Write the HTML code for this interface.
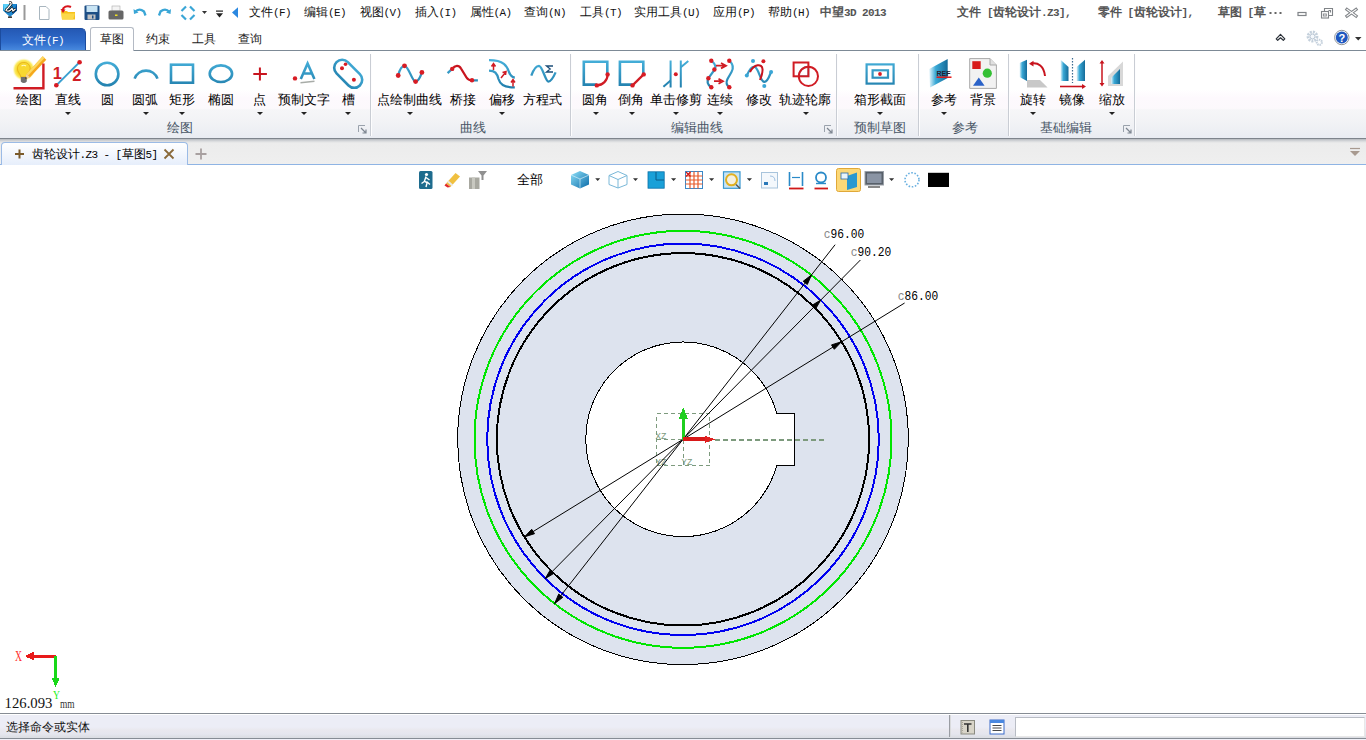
<!DOCTYPE html>
<html><head><meta charset="utf-8">
<style>
*{margin:0;padding:0;box-sizing:border-box}
html,body{width:1366px;height:740px;overflow:hidden;background:#fff;font-family:"Liberation Sans",sans-serif;font-size:12px;color:#222}
.a{position:absolute;white-space:nowrap}
.t{font-size:12px;line-height:14px;color:#111}
.b{font-weight:bold;color:#555}
.m{font-family:"Liberation Mono",monospace;font-size:11px;letter-spacing:-0.6px}
#title{left:0;top:0;width:1366px;height:27px;background:#fff}
#tabs{left:0;top:27px;width:1366px;height:24px;background:#fff}
#filebtn{left:0;top:28px;width:86px;height:23px;background:linear-gradient(#2458b4,#2f6ccb 60%,#4a8ce0);border:1px solid #1c4c9e;border-bottom:none;border-radius:0 5px 0 0;color:#fff;font-size:12px;text-align:center;line-height:22px}
#acttab{z-index:2;left:90px;top:27px;width:44px;height:24px;background:#fff;border:1px solid #b4bac4;border-bottom:none;border-radius:3px 3px 0 0}
#ribbon{left:0;top:50px;width:1366px;height:89px;background:linear-gradient(#fff 0,#fff 44%,#fdf9fd 54%,#fcf9fc 66%,#f6f6f8 67.5%,#f1f2f5 84%,#e9ecf2 100%);border-top:1px solid #7d8a96;border-bottom:1px solid #7e848c}
.sep{position:absolute;top:54px;width:2px;height:82px;background:linear-gradient(90deg,#c9cdd4 50%,#fdfdfe 50%)}
.lbl{position:absolute;top:92px;font-size:12.5px;line-height:16px;color:#000;text-align:center}
.glbl{position:absolute;top:120px;font-size:12.5px;line-height:16px;color:#485666;text-align:center}
.dd{position:absolute;top:112px;width:0;height:0;border-left:3.5px solid transparent;border-right:3.5px solid transparent;border-top:3.5px solid #222}
#doctabs{left:0;top:139px;width:1366px;height:26px;background:linear-gradient(#b4b8bd 0,#d6d8db 2px,#ececec 4px,#efefef 100%);border-bottom:1px solid #8fb4e4}
#doctab{left:1px;top:142px;width:187px;height:23px;background:linear-gradient(#ffffff,#e6eefb);border:1px solid #9bbbe6;border-bottom:none;border-radius:4px 4px 0 0}
#status{left:0;top:713px;width:1366px;height:27px;background:linear-gradient(#868c94 0,#868c94 1px,#fff 1px,#fff 2px,#ecedf6 2px,#ecedf6 14px,#e9e8ee 17px,#e5e6ee 21px,#dcdee4 24px,#dcdee4 25px,#868c94 25px,#868c94 26px,#f0f0f8 26px)}
</style></head><body>
<div id="title" class="a"></div>
<div id="tabs" class="a"></div>
<div id="filebtn" class="a">文件<span class="m">(F)</span></div>
<div id="acttab" class="a"></div>
<div id="ribbon" class="a"></div>
<!--RIB-->
<div class="lbl" style="left:-21.5px;width:100px">绘图</div>
<div class="lbl" style="left:18.0px;width:100px">直线</div>
<div class="lbl" style="left:57.0px;width:100px">圆</div>
<div class="lbl" style="left:95.0px;width:100px">圆弧</div>
<div class="lbl" style="left:131.5px;width:100px">矩形</div>
<div class="lbl" style="left:171.0px;width:100px">椭圆</div>
<div class="lbl" style="left:209.0px;width:100px">点</div>
<div class="lbl" style="left:253.5px;width:100px">预制文字</div>
<div class="lbl" style="left:298.0px;width:100px">槽</div>
<div class="lbl" style="left:359.0px;width:100px">点绘制曲线</div>
<div class="lbl" style="left:413.4px;width:100px">桥接</div>
<div class="lbl" style="left:452.0px;width:100px">偏移</div>
<div class="lbl" style="left:492.6px;width:100px">方程式</div>
<div class="lbl" style="left:544.8px;width:100px">圆角</div>
<div class="lbl" style="left:581.3px;width:100px">倒角</div>
<div class="lbl" style="left:625.5px;width:100px">单击修剪</div>
<div class="lbl" style="left:669.5px;width:100px">连续</div>
<div class="lbl" style="left:708.5px;width:100px">修改</div>
<div class="lbl" style="left:755.0px;width:100px">轨迹轮廓</div>
<div class="lbl" style="left:830.0px;width:100px">箱形截面</div>
<div class="lbl" style="left:893.5px;width:100px">参考</div>
<div class="lbl" style="left:932.5px;width:100px">背景</div>
<div class="lbl" style="left:983.0px;width:100px">旋转</div>
<div class="lbl" style="left:1022.3px;width:100px">镜像</div>
<div class="lbl" style="left:1061.6px;width:100px">缩放</div>
<div class="glbl" style="left:130.0px;width:100px">绘图</div>
<div class="glbl" style="left:423.0px;width:100px">曲线</div>
<div class="glbl" style="left:647.3px;width:100px">编辑曲线</div>
<div class="glbl" style="left:830.0px;width:100px">预制草图</div>
<div class="glbl" style="left:915.4px;width:100px">参考</div>
<div class="glbl" style="left:1015.8px;width:100px">基础编辑</div>
<div class="dd" style="left:64.5px"></div>
<div class="dd" style="left:142.5px"></div>
<div class="dd" style="left:178.5px"></div>
<div class="dd" style="left:256.5px"></div>
<div class="dd" style="left:300.5px"></div>
<div class="dd" style="left:344.5px"></div>
<div class="dd" style="left:406.5px"></div>
<div class="dd" style="left:499.1px"></div>
<div class="dd" style="left:592.5px"></div>
<div class="dd" style="left:628.5px"></div>
<div class="dd" style="left:672.5px"></div>
<div class="dd" style="left:716.5px"></div>
<div class="dd" style="left:803.3px"></div>
<div class="dd" style="left:877.0px"></div>
<div class="dd" style="left:940.5px"></div>
<div class="dd" style="left:1030.2px"></div>
<div class="dd" style="left:1109.0px"></div>
<div class="sep" style="left:370.0px"></div>
<div class="sep" style="left:570.0px"></div>
<div class="sep" style="left:836.0px"></div>
<div class="sep" style="left:918.0px"></div>
<div class="sep" style="left:1008.0px"></div>
<div class="sep" style="left:1133.5px"></div>
<svg class="a" style="left:358px;top:125px" width="9" height="9"><path d="M0.5 7V0.5H7" fill="none" stroke="#9aa2ac"/><path d="M3 3L8 8M8 4.5V8H4.5" fill="none" stroke="#7d8590" stroke-width="1.2"/></svg>
<svg class="a" style="left:824px;top:125px" width="9" height="9"><path d="M0.5 7V0.5H7" fill="none" stroke="#9aa2ac"/><path d="M3 3L8 8M8 4.5V8H4.5" fill="none" stroke="#7d8590" stroke-width="1.2"/></svg>
<svg class="a" style="left:1122.5px;top:125px" width="9" height="9"><path d="M0.5 7V0.5H7" fill="none" stroke="#9aa2ac"/><path d="M3 3L8 8M8 4.5V8H4.5" fill="none" stroke="#7d8590" stroke-width="1.2"/></svg>
<!--/RIB-->
<!--ICO-->
<svg class="a" style="left:0;top:0" width="1366" height="140" viewBox="0 0 1366 140">
<defs>
<linearGradient id="bl" gradientUnits="userSpaceOnUse" x1="0" y1="55" x2="0" y2="92"><stop offset="0" stop-color="#4cb8e2"/><stop offset="1" stop-color="#1c78a6"/></linearGradient>
<linearGradient id="pr" x1="0" y1="0" x2="1" y2="0"><stop offset="0" stop-color="#e8f6fb"/><stop offset=".35" stop-color="#3aa9d6"/><stop offset="1" stop-color="#146b99"/></linearGradient>
<radialGradient id="glow"><stop offset=".55" stop-color="#f7d21c"/><stop offset=".8" stop-color="#fbec6a"/><stop offset="1" stop-color="#fffbd0" stop-opacity="0"/></radialGradient>
</defs>
<!-- title bar -->
<path d="M3 4 H17 V10.5 L10 17 L3 10.5 Z" fill="#1e88d0"/><path d="M3 4 H10 L4 11 Z" fill="#5cd0f8"/><path d="M17 4 V10.5 L12 15 Z" fill="#0a4a90"/>
<path d="M9 2.2 Q11.5 2 11 4.5 L8 8 Q6 9.5 6 10.5 Q8.5 12 10.5 10 L12 8.5 L13 11 L15.5 9" stroke="#000" stroke-width="2.6" fill="none"/><path d="M9 2.2 Q11.5 2 11 4.5 L8 8 Q6 9.5 6 10.5 Q8.5 12 10.5 10 L12 8.5 L13 11 L15.5 9" stroke="#fff" stroke-width="1.3" fill="none"/><rect x="8" y="16.5" width="4" height="1.3" fill="#111"/>
<rect x="23.5" y="5" width="2" height="15" fill="#999"/>
<path d="M39.5 6.5 H46 L49 9.5 V19.5 H39.5 Z" fill="#fff" stroke="#a9b6bf"/>
<path d="M61 11 H67 L68 12 H75 V19.5 H62 Z" fill="#f6c21c"/>
<path d="M61.5 13.5 H75 L73 19.5 H62 Z" fill="#fbd84a"/>
<path d="M71 7 C67 5 63 7 62.5 10.5" stroke="#d8141c" stroke-width="2" fill="none"/><path d="M60.5 9 L63 13 L65.5 9.5 Z" fill="#d8141c"/>
<rect x="84.5" y="5.5" width="15" height="14.5" rx="1" fill="#1d4f86"/><rect x="86.5" y="6" width="11" height="6" fill="#c8e4f4"/><rect x="87.5" y="14.5" width="8" height="5" fill="#c0c0c0"/><rect x="92" y="15.5" width="1.5" height="3" fill="#1d4f86"/>
<rect x="112" y="6" width="8" height="5" fill="#f4f4f4" stroke="#aaa" stroke-width=".6"/><path d="M108.5 12 Q108.5 10.5 110 10.5 H122 Q123.5 10.5 123.5 12 V18 Q123.5 19.5 122 19.5 H110 Q108.5 19.5 108.5 18 Z" fill="#666"/><rect x="115" y="14.5" width="2.5" height="1.5" fill="#f0e020"/>
<path d="M135 12 Q139 7.5 144 11.5 L145.5 15.5" stroke="#3aa6d6" stroke-width="2.3" fill="none"/><path d="M133.5 9 L134 14 L138.5 12.5 Z" fill="#3aa6d6"/>
<path d="M169.5 12 Q165.5 7.5 160.5 11.5 L159 15.5" stroke="#3aa6d6" stroke-width="2.3" fill="none"/><path d="M171 9 L170.5 14 L166 12.5 Z" fill="#3aa6d6"/>
<g stroke="#3aa6d6" stroke-width="2.2" fill="none"><path d="M186 6.5 L181.5 11"/><path d="M190 6.5 L194.5 11"/><path d="M181.5 15 L186 19.5"/><path d="M194.5 15 L190 19.5"/></g>
<path d="M202 11 H207 L204.5 14 Z" fill="#333"/>
<rect x="216" y="10.5" width="7" height="1.2" fill="#222"/><path d="M216 13.2 H223 L219.5 17.5 Z" fill="#222"/>
<path d="M238 7.2 V18 L232 12.6 Z" fill="#2b88e0"/>
<!-- ribbon row icons -->
<path d="M1276.2 38.8 L1280.5 34.3 L1284.8 38.8 L1283.3 40.3 L1280.5 37.8 L1277.7 40.3 Z" stroke="#2a3038" stroke-width="1.2" fill="none" stroke-linejoin="round"/>
<circle cx="1312.5" cy="36.5" r="4.5" fill="none" stroke="#c4d0dc" stroke-width="2.8" stroke-dasharray="2 1"/><circle cx="1312.5" cy="36.5" r="2.5" fill="#f4f8fc" stroke="#a8b8c8" stroke-width=".8"/><circle cx="1319.3" cy="42.3" r="2.6" fill="none" stroke="#c4d0dc" stroke-width="2" stroke-dasharray="1.5 .8"/>
<circle cx="1341.8" cy="37.5" r="7.2" fill="#fff" stroke="#909498" stroke-width="1"/><circle cx="1341.8" cy="37.5" r="6" fill="#1f58c0"/><text x="1341.8" y="41.8" font-family="Liberation Sans" font-weight="bold" font-size="11" fill="#fff" text-anchor="middle">?</text>
<path d="M1355 37 H1361.5 L1358.2 40.5 Z" fill="#333"/>
<!-- group 1 -->
<circle cx="23.8" cy="69.5" r="11.5" fill="url(#glow)"/>
<path d="M23.8 62.5 C19.5 62.5 17.5 65.5 17.5 68.8 C17.5 72 20.5 74 20.8 77 H26.8 C27.1 74 30.1 72 30.1 68.8 C30.1 65.5 28.1 62.5 23.8 62.5 Z" fill="#f8d830" stroke="#e0a818" stroke-width=".7"/><path d="M21.5 66 Q23.8 64.5 26 66" stroke="#fff8c0" stroke-width="1.2" fill="none"/>
<path d="M20.8 77 H26.8 V81.5 Q23.8 84.5 20.8 81.5 Z" fill="#707070"/>
<path d="M42.7 56.3 L26.4 73.9 L25 79 L30 77.3 L46.3 59.7 Z" fill="#f5a81c"/><path d="M42.7 56.3 L26.4 73.9 L28.2 75.6 L44.5 58 Z" fill="#fcd860"/><path d="M26.4 73.9 L25 79 L30 77.3 Z" fill="#f0d0a0"/><path d="M25.6 76.8 L25 79 L27.2 78.2 Z" fill="#222"/>
<path d="M13.5 88.2 H43.4 V63.5" stroke="#d01c24" stroke-width="2.4" fill="none"/>
<text x="52.8" y="79.3" font-family="Liberation Sans" font-weight="bold" font-size="16.5" fill="#d01c24">1</text>
<text x="72.2" y="81.2" font-family="Liberation Sans" font-weight="bold" font-size="16.5" fill="#d01c24">2</text>
<path d="M56.3 85.4 L79.6 62.1" stroke="#3aa0d0" stroke-width="2"/>
<circle cx="56.3" cy="85.3" r="2.3" fill="#d81c24"/><circle cx="79.6" cy="62.2" r="2.3" fill="#d81c24"/>
<g stroke="url(#bl)" stroke-width="2.6" fill="none">
<circle cx="107.1" cy="74" r="11.3"/>
<path d="M134.6 78.6 A12.2 12.2 0 0 1 157.5 78.6"/>
<rect x="171" y="64.7" width="22" height="18"/>
<ellipse cx="220.9" cy="73.7" rx="11.2" ry="8.3"/>
<path d="M300.8 79 L307.6 63.5 L314.4 79 M303.5 73.5 H311.7"/>
<rect x="331.7" y="65.8" width="33" height="16" rx="8" transform="rotate(45 348.2 73.8)"/>
</g>
<path d="M253.3 74 H266.9 M259.9 67.4 V80.6" stroke="#c8141e" stroke-width="2"/>
<circle cx="295" cy="78.4" r="2.2" fill="#d81c24"/>
<path d="M300.5 82.8 L314.5 81.3" stroke="#a8aca8" stroke-width="1.6"/>
<circle cx="342" cy="68.3" r="2" fill="#d81c24"/><circle cx="345.5" cy="64.3" r="1.8" fill="#d81c24"/><circle cx="353.9" cy="79.7" r="2" fill="#d81c24"/>
<!-- group 2 -->
<g stroke="url(#bl)" stroke-width="2.3" fill="none">
<path d="M398.2 75.5 C400 68 402.5 65.8 404.5 65.8 C409 66.5 412 81.6 415.6 81.6 C419 81.5 421 75 421.9 72.4"/>
<path d="M447.6 73.1 L452.2 68.9 M472 80.3 H477.9"/>
<path d="M489 60.2 C504 60.2 507 66 509 72 C510.5 76 512 77.5 514.8 77.5"/>
<path d="M489 70.6 C495 70.6 497 73 498.5 79 C500 84 503 87.4 514.8 87.4"/>
<path d="M531.3 75.7 C534 68 536.5 65.8 539 65.8 C542.5 66 545.5 81.6 548.4 81.6 C551.5 81.5 554 76 555.6 72.4"/>
</g>
<circle cx="398.2" cy="75.5" r="2.4" fill="#d81c24"/><circle cx="404.5" cy="65.8" r="2.4" fill="#d81c24"/><circle cx="415.6" cy="81.6" r="2.4" fill="#d81c24"/><circle cx="421.9" cy="72.4" r="2.4" fill="#d81c24"/>
<path d="M452.2 68.9 C455 65 459 65 461 68.5 L466.5 77.5 C468 80 470 80.3 472 80.3" stroke="#c8141e" stroke-width="2.3" fill="none"/>
<circle cx="452.2" cy="68.9" r="2.2" fill="#d81c24"/><circle cx="472" cy="80.3" r="2.2" fill="#d81c24"/>
<path d="M493.5 70 V65 M491.5 66.5 L493.5 63.5 L495.5 66.5 M513 86.5 V81 M511 82.5 L513 79.5 L515 82.5 M501 78 L505 73 M502.5 72.5 L506 71.5 L505.5 75" stroke="#d01c24" stroke-width="1.5" fill="none"/>
<path d="M553 66 H546.5 L550.2 69 L546.5 72 H553" stroke="#1b4d78" stroke-width="1.3" fill="none"/>
<!-- group 3 -->
<g stroke="url(#bl)" stroke-width="2.6" fill="none">
<path d="M596.8 84.6 H583.8 V61.8 H607.3 V74.4"/>
<path d="M632.5 84.6 H619.9 V61.8 H643.3 V74.4"/>
<path d="M670.6 60.5 V87.5 M680.8 60.5 V87.5" stroke-width="2"/>
<path d="M663.4 86.8 L670.6 80.4 M680.8 67.2 L688.3 61" stroke-width="2"/>
<path d="M711.3 60.5 Q717.5 66 714.4 70 L708.6 77.8 Q705.5 83 711.3 87.5" stroke-width="2.2"/>
<path d="M729.3 60.5 Q735 66 731.5 72 L727.5 79 Q725 84 729.3 87.5" stroke-width="2.2"/>
<path d="M746.8 75.6 C750 68 752.5 66 755 67 C759 69 760.5 82 764.3 81.9 C768 82 770 74 771.1 71.9" stroke-width="2.2"/>
<path d="M808.4 66.6 A9.7 9.7 0 0 0 798.7 76.3 H808.4 Z" stroke-width="1.6"/>
<rect x="866.6" y="64.4" width="27" height="19.2" stroke-width="2.2"/>
<rect x="872.6" y="70.3" width="15.4" height="7.4" stroke-width="2.2"/>
</g>
<path d="M596.8 85.4 A11 11 0 0 0 607.6 74.4" stroke="#d01c24" stroke-width="2.2" fill="none"/>
<circle cx="596.8" cy="85.4" r="2.2" fill="#d81c24"/><circle cx="607.6" cy="74.4" r="2.2" fill="#d81c24"/>
<path d="M632.5 85.4 L643.7 74.4" stroke="#d01c24" stroke-width="2.2"/>
<circle cx="632.5" cy="85.4" r="2.2" fill="#d81c24"/><circle cx="643.7" cy="74.4" r="2.2" fill="#d81c24"/>
<circle cx="675.8" cy="74.2" r="2" fill="#d81c24"/>
<path d="M716 65.7 H724 M721 63 L726 65.7 L721 68.4 M714 81.2 H721 M718.5 78.7 L723 81.2 L718.5 83.7" stroke="#d01c24" stroke-width="1.8" fill="none"/>
<circle cx="711.3" cy="60.8" r="2.2" fill="#d81c24"/><circle cx="714.4" cy="69.5" r="2.2" fill="#d81c24"/><circle cx="708.4" cy="78.2" r="2.2" fill="#d81c24"/><circle cx="711.3" cy="87.3" r="2.2" fill="#d81c24"/><circle cx="729.3" cy="60.8" r="2.2" fill="#d81c24"/><circle cx="729.3" cy="87.3" r="2.2" fill="#d81c24"/>
<path d="M750 72 C754 64 762 63 762.5 69 C763 73 761 77 760 80" stroke="#c8141e" stroke-width="2" fill="none"/>
<circle cx="753" cy="61" r="2" fill="#3aa6d6"/><circle cx="764.3" cy="85.9" r="2" fill="#3aa6d6"/><circle cx="746.8" cy="75.6" r="2" fill="#3aa6d6"/><circle cx="771.1" cy="71.9" r="2" fill="#3aa6d6"/><circle cx="763.4" cy="61.3" r="2" fill="#d81c24"/>
<rect x="793.6" y="62.5" width="14.8" height="13.8" stroke="#d01c24" stroke-width="2" fill="none"/>
<circle cx="808.4" cy="76.3" r="9.6" stroke="#d01c24" stroke-width="2" fill="none"/>
<circle cx="880" cy="74" r="1.9" fill="#d81c24"/>
<!-- group 4/5 -->
<path d="M929.2 68.9 L947.7 58.9 L947.7 78.1 L930 87.4 Z" fill="url(#pr)"/>
<text x="936.5" y="75.5" font-family="Liberation Sans" font-weight="bold" font-size="7" fill="#223">REF</text>
<path d="M936.5 77.2 H951.5" stroke="#e01818" stroke-width="1.5"/>
<path d="M969.7 58.6 H990 L996.4 65 V88.4 H969.7 Z" fill="#f2f2f2" stroke="#a8a8a8"/>
<path d="M990 58.6 V65 H996.4" fill="#e0e0e0" stroke="#a8a8a8"/>
<rect x="972.3" y="61.2" width="8.4" height="7.8" fill="#d81c1c"/>
<circle cx="987.3" cy="73.2" r="4.6" fill="#34c034"/>
<path d="M973 85.8 L978.8 77.4 L984.6 85.8 Z" fill="#2a62c8"/>
<!-- group 6 -->
<path d="M1019.5 63 L1027 59.7 V81 L1019.5 77 Z" fill="url(#pr)"/>
<path d="M1027 80 H1040 L1047.6 87.4 H1027 Z" fill="#c8c8c8"/>
<path d="M1031 63.5 C1038 62 1044 66 1045 76" stroke="#c8141e" stroke-width="2" fill="none"/><path d="M1029 63.8 L1033.5 60.8 L1033.5 66.5 Z" fill="#c8141e"/>
<path d="M1060.5 59.7 L1068.5 67 V81 H1060.5 Z" fill="url(#pr)"/>
<path d="M1085 59.7 L1076.5 67 V81 H1085 Z" fill="url(#pr)"/>
<path d="M1072.5 58 V83" stroke="#3a6a90" stroke-width="1.2" stroke-dasharray="1.5 1.5"/>
<path d="M1060 86.5 H1083" stroke="#c8141e" stroke-width="1.6"/><path d="M1082 84 L1086 86.5 L1082 89 Z" fill="#c8141e"/>
<path d="M1102 62 V84.5" stroke="#c8141e" stroke-width="1.5"/><path d="M1099.5 63.5 L1102 60 L1104.5 63.5 Z M1099.5 83 L1102 86.5 L1104.5 83 Z" fill="#c8141e"/>
<path d="M1108 76 L1123 61.5 V86 H1108 Z" fill="#d8d8d8"/><path d="M1111 78 L1120 69 V84 H1111 Z" fill="url(#pr)"/>
</svg>

<!--/ICO-->
<div id="doctabs" class="a"></div>
<div id="doctab" class="a"></div>
<!--MISC-->
<div class="a t" style="left:249px;top:5px">文件<span class="m">(F)</span></div>
<div class="a t" style="left:304px;top:5px">编辑<span class="m">(E)</span></div>
<div class="a t" style="left:359.5px;top:5px">视图<span class="m">(V)</span></div>
<div class="a t" style="left:414.5px;top:5px">插入<span class="m">(I)</span></div>
<div class="a t" style="left:469.5px;top:5px">属性<span class="m">(A)</span></div>
<div class="a t" style="left:524px;top:5px">查询<span class="m">(N)</span></div>
<div class="a t" style="left:580px;top:5px">工具<span class="m">(T)</span></div>
<div class="a t" style="left:634px;top:5px">实用工具<span class="m">(U)</span></div>
<div class="a t" style="left:713px;top:5px">应用<span class="m">(P)</span></div>
<div class="a t" style="left:768px;top:5px">帮助<span class="m">(H)</span></div>
<div class="a t b" style="left:820px;top:5px">中望<span class="m">3D&#160;2013</span></div>
<div class="a t b" style="left:957px;top:5px">文件<span class="m">&#160;[</span>齿轮设计<span class="m">.Z3],</span></div>
<div class="a t b" style="left:1097.5px;top:5px">零件<span class="m">&#160;[</span>齿轮设计<span class="m">],</span></div>
<div class="a t b" style="left:1217.5px;top:5px">草图<span class="m">&#160;[</span>草</div>
<svg class="a" style="left:1268px;top:10px" width="16" height="6"><rect x="1.5" y="2" width="2" height="2" fill="#666"/><rect x="6.5" y="2" width="2" height="2" fill="#666"/><rect x="11.5" y="2" width="2" height="2" fill="#666"/></svg>
<svg class="a" style="left:1290px;top:4px" width="76" height="18">
<rect x="8" y="8.5" width="8" height="3" fill="none" stroke="#808488" stroke-width="1.2"/>
<rect x="31.5" y="7.5" width="7" height="6.5" fill="none" stroke="#808488" stroke-width="1.1"/><rect x="33.3" y="10" width="3" height="2" fill="none" stroke="#808488" stroke-width=".9"/><path d="M34.5 7.5 V4.5 H42.5 V11.5 H38.5 M38.5 6.5 H40.5 V8.5" fill="none" stroke="#808488" stroke-width="1.1"/>
<path d="M57 5.5 L66 12 M66 5.5 L57 12" stroke="#808488" stroke-width="3.2" stroke-linecap="square"/><path d="M57 5.5 L66 12 M66 5.5 L57 12" stroke="#fff" stroke-width="1.1" stroke-linecap="square"/>
</svg>
<div class="a" style="left:99.5px;top:32px;font-size:12px;line-height:15px;color:#222;z-index:3">草图</div>
<div class="a" style="left:145.5px;top:32px;font-size:12px;line-height:15px;color:#222">约束</div>
<div class="a" style="left:191.5px;top:32px;font-size:12px;line-height:15px;color:#222">工具</div>
<div class="a" style="left:237.5px;top:32px;font-size:12px;line-height:15px;color:#222">查询</div>
<svg class="a" style="left:0;top:139px" width="1366" height="26">
<path d="M15 15 H24 M19.5 10.5 V19.5" stroke="#7a5a2a" stroke-width="2"/>
<path d="M164.5 10.5 L173.5 19.5 M173.5 10.5 L164.5 19.5" stroke="#8a6a3a" stroke-width="1.8"/>
<path d="M195.5 15 H206.5 M201 9.5 V20.5" stroke="#a8a0a0" stroke-width="1.8"/>
<path d="M1350 9.5 H1360" stroke="#a89a90" stroke-width="1.2"/><path d="M1350 12 H1360 L1355 17 Z" fill="#a89a90"/>
</svg>
<div class="a t" style="left:31.5px;top:146.5px;line-height:15px;font-size:12px;color:#000">齿轮设计<span class="m">.Z3&#160;-&#160;[</span>草图<span class="m">5]</span></div>
<!--/MISC-->
<!--VP-->
<svg class="a" style="left:0;top:165px" width="1366" height="30" viewBox="0 165 1366 30">
<defs>
<linearGradient id="cb" x1="0" y1="0" x2="1" y2="1"><stop offset="0" stop-color="#8ee0f8"/><stop offset="1" stop-color="#0a6aa8"/></linearGradient>
</defs>
<rect x="419" y="171" width="13.5" height="18" rx="1.5" fill="#1e6c8e"/>
<circle cx="426.5" cy="174.5" r="1.6" fill="#fff"/><path d="M426 176.5 L424.5 181 L427 183 L426 187 M425 181 L421.5 183.5 M426 177.5 L429.5 180 M426.5 181.5 L430 184.5" stroke="#fff" stroke-width="1.4" fill="none"/>
<path d="M446 183.5 L455.5 173 L460 176.5 L450.5 187 Z" fill="#f0c040"/><path d="M446 183.5 L450.5 187 L447.5 187.5 L444.5 185.5 Z" fill="#e02a2a"/><path d="M448 181.5 L452.5 185.5" stroke="#e8e8e8" stroke-width="2"/>
<rect x="469" y="177.5" width="10.5" height="11.5" fill="#a8a8a0"/><rect x="472" y="177.5" width="3" height="11.5" fill="#c8c8c0"/><path d="M478 171 H487 L483.5 175.5 V180 H481.5 V175.5 Z" fill="#909090"/>
<path d="M571 175 L580 171 L589 175 V184.5 L580 188.5 L571 184.5 Z" fill="url(#cb)"/><path d="M571 175 L580 179 L589 175 M580 179 V188.5" stroke="#e8f8ff" stroke-width=".6" fill="none"/>
<path d="M609 175.5 L618 171.5 L627 175.5 V184.5 L618 188 L609 184.5 Z M609 175.5 L618 179.5 L627 175.5 M618 179.5 V188" fill="#fff" stroke="#7ab8d8" stroke-width="1"/>
<rect x="648" y="171.8" width="16.2" height="16.4" fill="#1aa0d8" stroke="#0a70a8" stroke-width=".8"/><path d="M656 172 V180 H664" stroke="#0a5a88" stroke-width="1" fill="none"/>
<rect x="685.5" y="171.5" width="17" height="17" fill="#fff" stroke="#3a88c8"/>
<g stroke="#e85a2a" stroke-width="1.2"><path d="M685.5 176 H702.5 M685.5 180 H702.5 M685.5 184 H702.5 M690 171.5 V188.5 M694 171.5 V188.5 M698 171.5 V188.5"/></g>
<path d="M686 172 L690.5 176.5 M690.5 172 L686 176.5" stroke="#d01818" stroke-width="1.2"/>
<rect x="723.5" y="171.8" width="16.5" height="16.5" fill="#c8e4f4" stroke="#3a98d0" stroke-width="1.2"/><circle cx="731.5" cy="179.8" r="5.5" fill="#f4f0e0" stroke="#e0b020" stroke-width="2"/><path d="M736 184.5 L740 188.5" stroke="#555" stroke-width="1.5"/>
<rect x="761.5" y="172.5" width="16" height="15.5" fill="#f4f8fc" stroke="#a8c4dc"/><rect x="764" y="182" width="4" height="3" fill="#2a78b8"/><path d="M770 176 Q775 176 775 181" stroke="#a0c0e0" fill="none"/>
<path d="M789.5 172 V186 M802.5 172 V186" stroke="#2a8ac8" stroke-width="1.6"/><path d="M792 177.5 H800" stroke="#2a8ac8" stroke-width="1.2"/><path d="M789 188.5 H803.5" stroke="#d01818" stroke-width="1.8"/>
<circle cx="821" cy="177.5" r="5" fill="none" stroke="#2a8ac8" stroke-width="1.8"/><path d="M816 183.5 H826" stroke="#2a8ac8" stroke-width="1.4"/><path d="M814.5 188.5 H828" stroke="#d01818" stroke-width="1.8"/>
<rect x="836.5" y="168.5" width="24" height="23" rx="2" fill="#fcd877" stroke="#e0a838"/>
<path d="M847 176 L857 172.5 V187 L847 190 Z" fill="#2a98d0"/><rect x="841" y="173" width="7" height="6" fill="#e8f4fc" stroke="#2a6aa8" stroke-width=".8"/>
<rect x="865" y="171.5" width="18.5" height="13.5" fill="#58606a" stroke="#9aa0a8"/><rect x="867" y="173.5" width="14.5" height="9.5" fill="#8a94a4"/><path d="M868 187 H880" stroke="#888" stroke-width="2"/>
<circle cx="912" cy="179.8" r="7" fill="none" stroke="#6ab0e0" stroke-width="1.6" stroke-dasharray="1.6 1.6"/>
<rect x="928" y="172.8" width="21" height="14.2" fill="#000"/>
<path d="M595.2 178.3 H600.2 L597.7 181 Z M633 178.3 H638 L635.5 181 Z M671 178.3 H676.2 L673.6 181 Z M709 178.3 H714.2 L711.6 181 Z M746.8 178.3 H752 L749.4 181 Z M889 178.3 H894.2 L891.6 181 Z" fill="#333"/>
</svg>
<div class="a" style="left:516.5px;top:173px;font-size:12.5px;line-height:15px;color:#000">全部</div>
<!--/VP-->

<svg class="a" style="left:0;top:0" width="1366" height="740" viewBox="0 0 1366 740" shape-rendering="crispEdges">
<circle cx="683" cy="439.3" r="225.3" fill="#dde3ee" stroke="#000" stroke-width="1"/>
<circle cx="683" cy="439.3" r="208.5" fill="none" stroke="#00e600" stroke-width="2"/>
<circle cx="683" cy="439.3" r="195.8" fill="none" stroke="#0000f0" stroke-width="2"/>
<circle cx="683" cy="439.3" r="186.2" fill="none" stroke="#000" stroke-width="2"/>
<path d="M776.8 413.3 L794.5 413.3 L794.5 465.3 L776.8 465.3 A97.3 97.3 0 1 1 776.8 413.3 Z" fill="#fff" stroke="#000" stroke-width="1"/>
<g stroke="#7d9a7d" stroke-width="1" fill="none" stroke-dasharray="4 3">
<rect x="656.5" y="413.5" width="53" height="52"/>
<line x1="683" y1="439.5" x2="683" y2="465.5"/>
<line x1="656.5" y1="439.5" x2="683" y2="439.5"/>
</g>
<line x1="715" y1="440" x2="824" y2="440" stroke="#7d9a7d" stroke-width="2" stroke-dasharray="5 3"/>
<g fill="#7d9a7d" font-family="Liberation Mono" font-size="9">
<text x="655.5" y="439">XZ</text><text x="655.5" y="465">YZ</text><text x="681.5" y="465">YZ</text>
</g>
<g stroke="#000" stroke-width="1" fill="#000" shape-rendering="geometricPrecision">
<line x1="835.1" y1="244.7" x2="554.6" y2="603.6"/>
<polygon points="811.4,275.0 803.2,281.3 807.3,284.5"/>
<polygon points="554.6,603.6 558.7,594.1 562.8,597.3"/>
<line x1="860.4" y1="260.0" x2="545.3" y2="578.5"/>
<polygon points="820.7,300.1 811.8,305.4 815.5,309.1"/>
<polygon points="545.3,578.5 550.5,569.5 554.2,573.2"/>
<line x1="904.6" y1="303.0" x2="524.6" y2="536.8"/>
<polygon points="841.4,341.8 831.5,344.9 834.3,349.3"/>
<polygon points="524.6,536.8 531.7,529.3 534.5,533.7"/>
</g>
<g stroke="none">
<rect x="681.6" y="417" width="3.4" height="23" fill="#1fcf1f"/>
<polygon points="683.3,407.5 678.8,418.5 687.8,418.5" fill="#1fcf1f"/>
<rect x="683" y="437.2" width="24" height="4" fill="#d81818"/>
<polygon points="715.5,439.2 704.5,435.5 704.5,443" fill="#e02020"/>
</g>
<g font-family="Liberation Mono" font-size="12.4">
<text x="823.7" y="237.6" textLength="40.5" lengthAdjust="spacingAndGlyphs"><tspan fill="#888">c</tspan><tspan fill="#000">96.00</tspan></text>
<text x="850.7" y="255.6" textLength="40.5" lengthAdjust="spacingAndGlyphs"><tspan fill="#888">c</tspan><tspan fill="#000">90.20</tspan></text>
<text x="897.8" y="300" textLength="40.5" lengthAdjust="spacingAndGlyphs"><tspan fill="#888">c</tspan><tspan fill="#000">86.00</tspan></text>
</g>
<g>
<rect x="27" y="654.5" width="29" height="3" fill="#e81a1a"/>
<polygon points="24.5,656 34,651.5 34,660.5" fill="#e81a1a"/>
<rect x="54.2" y="656" width="3" height="23" fill="#18d818"/>
<polygon points="55.7,687.5 51.8,678 59.6,678" fill="#18d818"/>
<text x="15" y="661" font-family="Liberation Serif" font-size="14" fill="#ff2828" textLength="7" lengthAdjust="spacingAndGlyphs">X</text>
<text x="53" y="698.5" font-family="Liberation Serif" font-size="13.5" fill="#20f020" textLength="7" lengthAdjust="spacingAndGlyphs">Y</text>
<text x="4.6" y="708.4" font-family="Liberation Serif" font-size="15" fill="#111" textLength="47.8" lengthAdjust="spacingAndGlyphs">126.093</text>
<text x="60" y="708.4" font-family="Liberation Serif" font-size="12.5" fill="#333" textLength="14.6" lengthAdjust="spacingAndGlyphs">mm</text>
</g>
</svg>
<div id="status" class="a"></div>
<!--ST-->
<div class="a" style="left:6px;top:718.5px;font-size:12px;line-height:16px;color:#111">选择命令或实体</div>
<div class="a" style="left:949px;top:715px;width:2px;height:22px;background:linear-gradient(90deg,#7a7e86,#fafafa)"></div>
<svg class="a" style="left:955px;top:715px" width="60" height="24">
<rect x="6" y="5.5" width="13.5" height="13.5" fill="#d8d4c8" stroke="#8a8a80"/><path d="M9 9 H16.5 M12.8 9 V17" stroke="#333" stroke-width="1.6"/><path d="M7.5 7 V17.5" stroke="#a8a49a" stroke-dasharray="1 1"/>
<rect x="35" y="5" width="14" height="14" fill="#fff" stroke="#3a6ac8"/><rect x="35" y="5" width="14" height="3" fill="#4a88e0"/><path d="M37.5 10.5 H46.5 M37.5 13 H46.5 M37.5 15.5 H46.5" stroke="#333" stroke-width=".9"/>
</svg>
<div class="a" style="left:1015px;top:717px;width:350px;height:20px;background:#fff;border:1px solid #b8bcc4;border-right-color:#e8e8e8;border-bottom-color:#e8e8e8"></div>
<!--/ST-->

</body></html>
